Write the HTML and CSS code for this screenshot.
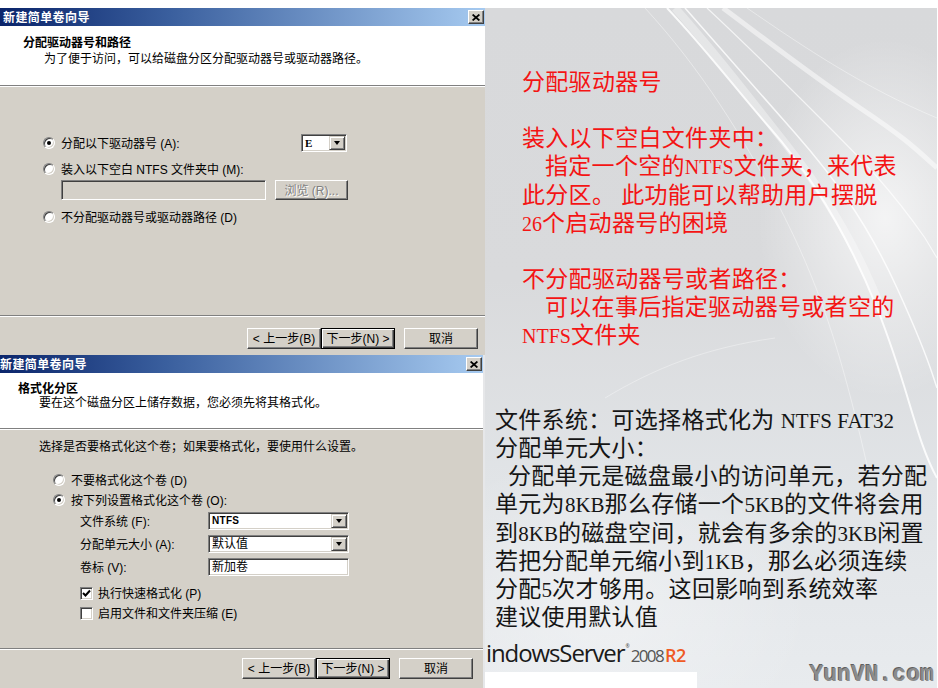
FILE: index.html
```html
<!DOCTYPE html>
<html lang="zh-CN">
<head>
<meta charset="utf-8">
<title>新建简单卷向导</title>
<link rel="stylesheet" href="styles.css">
</head>
<body>
<div class="page">
  <div class="dialogs">
    <section class="dlg dlg1">
      <div class="titlebar">
        <span class="title">新建简单卷向导</span>
        <span class="close"><svg width="8" height="7" viewBox="0 0 8 7"><path d="M0.6 0.5 L7.4 6.5 M7.4 0.5 L0.6 6.5" stroke="#000" stroke-width="1.7"/></svg></span>
      </div>
      <div class="header">
        <div class="h-title">分配驱动器号和路径</div>
        <div class="h-sub">为了便于访问，可以给磁盘分区分配驱动器号或驱动器路径。</div>
      </div>
      <div class="body">
        <div class="row r-first"><span class="radio on"></span><span class="lbl-wide">分配以下驱动器号 (A):</span><span class="combo combo-e"><span class="cval">E</span><span class="carrow"><i></i></span></span></div>
        <div class="row r-second"><span class="radio"></span><span>装入以下空白 NTFS 文件夹中 (M):</span></div>
        <div class="row r-third"><span class="field dis"></span><span class="btn dis">浏览 (R)...</span></div>
        <div class="row r-fourth"><span class="radio"></span><span>不分配驱动器号或驱动器路径 (D)</span></div>
      </div>
      <div class="sep"></div>
      <div class="footer">
        <span class="btn">&lt; 上一步(B)</span><span class="btn def">下一步(N) &gt;</span><span class="btn cancel">取消</span>
      </div>
    </section>

    <section class="dlg dlg2">
      <div class="titlebar">
        <span class="title">新建简单卷向导</span>
        <span class="close"><svg width="8" height="7" viewBox="0 0 8 7"><path d="M0.6 0.5 L7.4 6.5 M7.4 0.5 L0.6 6.5" stroke="#000" stroke-width="1.7"/></svg></span>
      </div>
      <div class="header">
        <div class="h-title">格式化分区</div>
        <div class="h-sub">要在这个磁盘分区上储存数据，您必须先将其格式化。</div>
      </div>
      <div class="body">
        <div class="intro">选择是否要格式化这个卷；如果要格式化，要使用什么设置。</div>
        <div class="row q1"><span class="radio"></span><span>不要格式化这个卷 (D)</span></div>
        <div class="row q2"><span class="radio on"></span><span>按下列设置格式化这个卷 (O):</span></div>
        <div class="row fld"><span class="flbl">文件系统 (F):</span><span class="combo combo-w"><span class="cval small">NTFS</span><span class="carrow"><i></i></span></span></div>
        <div class="row fld"><span class="flbl">分配单元大小 (A):</span><span class="combo combo-w"><span class="cval">默认值</span><span class="carrow"><i></i></span></span></div>
        <div class="row fld"><span class="flbl">卷标 (V):</span><span class="field input"><span class="cval">新加卷</span></span></div>
        <div class="row chk c1"><span class="check"><svg width="9" height="9" viewBox="0 0 9 9"><path d="M1 4 L3.5 6.5 L8 1.5" fill="none" stroke="#000" stroke-width="2"/></svg></span><span>执行快速格式化 (P)</span></div>
        <div class="row chk c2"><span class="check"></span><span>启用文件和文件夹压缩 (E)</span></div>
      </div>
      <div class="sep"></div>
      <div class="footer">
        <span class="btn">&lt; 上一步(B)</span><span class="btn def">下一步(N) &gt;</span><span class="btn cancel">取消</span>
      </div>
    </section>
  </div>

  <div class="panel">
    <svg class="swoosh" width="452" height="680" viewBox="0 0 452 680">
      <path d="M182 0 C220 40 250 80 285 120 S360 220 392 300 S430 430 452 470" stroke="#fff" stroke-opacity="0.85" stroke-width="2" fill="none"/>
      <path d="M200 0 C240 45 275 85 310 125 S380 210 412 280 S445 360 452 380" stroke="#fff" stroke-opacity="0.8" stroke-width="1.5" fill="none"/>
      <path d="M222 0 C265 40 300 75 340 115 S405 180 440 230 L452 250" stroke="#fff" stroke-opacity="0.7" stroke-width="1.2" fill="none"/>
      <path d="M238 0 C285 35 330 70 375 100 S430 140 452 160" stroke="#fff" stroke-opacity="0.5" stroke-width="5" fill="none"/>
      <path d="M190 0 C235 50 268 95 300 135 S370 230 400 310" stroke="#fff" stroke-opacity="0.35" stroke-width="8" fill="none"/>
      <path d="M160 0 C215 60 260 130 300 210 S360 360 385 470" stroke="#fff" stroke-opacity="0.4" stroke-width="1" fill="none"/>
      <path d="M262 0 C320 40 380 80 452 110" stroke="#fff" stroke-opacity="0.4" stroke-width="1" fill="none"/>
      <path d="M120 390 C170 360 220 340 290 330" stroke="#fff" stroke-opacity="0.35" stroke-width="1" fill="none"/>
    </svg>
    <div class="notes">
      <div class="red">
        <div class="ln">分配驱动器号</div>
        <div class="ln blank"></div>
        <div class="ln">装入以下空白文件夹中：</div>
        <div class="ln ind">指定一个空的<span class="lat">NTFS</span>文件夹，来代表</div>
        <div class="ln">此分区。 此功能可以帮助用户摆脱</div>
        <div class="ln"><span class="lat">26</span>个启动器号的困境</div>
        <div class="ln blank"></div>
        <div class="ln">不分配驱动器号或者路径：</div>
        <div class="ln ind">可以在事后指定驱动器号或者空的</div>
        <div class="ln"><span class="lat">NTFS</span>文件夹</div>
      </div>
      <div class="black">
        <div class="ln">文件系统：可选择格式化为 <span class="lat">NTFS FAT32</span></div>
        <div class="ln">分配单元大小：</div>
        <div class="ln ind-half">分配单元是磁盘最小的访问单元，若分配</div>
        <div class="ln">单元为<span class="lat">8KB</span>那么存储一个<span class="lat">5KB</span>的文件将会用</div>
        <div class="ln">到<span class="lat">8KB</span>的磁盘空间，就会有多余的<span class="lat">3KB</span>闲置</div>
        <div class="ln">若把分配单元缩小到<span class="lat">1KB</span>，那么必须连续</div>
        <div class="ln">分配<span class="lat">5</span>次才够用。这回影响到系统效率</div>
        <div class="ln">建议使用默认值</div>
      </div>
    </div>
    <div class="pfoot">
      <div class="logo-wrap">
        <div class="logo"><span class="ws">indowsServer</span><span class="tm">®</span><span class="yr">2008</span><span class="r2">R2</span></div>
        <div class="logo-base"></div>
      </div>
      <div class="watermark">YunVN.com</div>
    </div>
  </div>
</div>
</body>
</html>
```

FILE: styles.css
```css
* { box-sizing: border-box; margin: 0; padding: 0; }
html, body { width: 938px; height: 688px; overflow: hidden; background: #fff; }
body { font-family: "Noto Sans CJK SC", sans-serif; }

.page { display: flex; height: 688px; padding-top: 8px; }

/* ---------- dialogs ---------- */
.dialogs { width: 485px; flex: none; display: flex; flex-direction: column; background: #e6e7e9; }
.dlg { background: #d4d0c8; font-family: "Liberation Sans", "Noto Sans CJK SC", sans-serif; font-size: 12px; line-height: 14px; color: #000; display: flex; flex-direction: column; overflow: hidden; flex: none; }
.dlg1 { width: 485px; height: 347px; }
.dlg2 { width: 488px; height: 333px; margin-left: -5px; }

.titlebar { height: 18px; flex: none; background: linear-gradient(90deg, #0a246a 0%, #3a5f9e 35%, #a6caf0 100%); display: flex; align-items: center; justify-content: space-between; padding-left: 3px; padding-right: 1px; }
.dlg2 .titlebar { padding-left: 5px; }
.title { color: #fff; font-weight: bold; font-size: 12px; line-height: 14px; letter-spacing: 0.4px; padding-top: 1px; }
.close { width: 16px; height: 14px; background: #d4d0c8; border: 1px solid; border-color: #fff #404040 #404040 #fff; box-shadow: inset -1px -1px #808080; display: flex; align-items: center; justify-content: center; }

.header { background: #fff; border-bottom: 1px solid #808080; flex: none; padding-left: 23px; }
.dlg1 .header { height: 60px; padding-top: 10px; }
.dlg2 .header { height: 56px; padding-top: 9px; }
.h-title { font-weight: bold; }
.h-sub { padding-left: 21px; }
.dlg1 .h-sub { margin-top: 2px; }

.body { flex: 1; border-top: 1px solid #fff; }
.dlg1 .body { padding-top: 47px; }
.dlg2 .body { padding-top: 10px; }

.sep { height: 2px; flex: none; border-top: 1px solid #808080; border-bottom: 1px solid #fff; }
.footer { height: 38px; flex: none; display: flex; padding-left: 247px; }
.dlg1 .footer { padding-top: 11px; }
.dlg2 .footer { padding-top: 8px; }

.row { display: flex; align-items: center; white-space: nowrap; }
.row > span:last-child, .lbl-wide, .flbl { padding-top: 1px; }

/* dialog 1 rows */
.dlg1 .row { padding-left: 43px; }
.r-first { height: 18px; }
.r-second { height: 14px; margin-top: 10px; }
.r-third { height: 20px; margin-top: 4px; }
.dlg1 .r-third { padding-left: 61px; }
.r-fourth { height: 14px; margin-top: 10px; }
.lbl-wide { width: 240px; }

/* dialog 2 rows */
.intro { padding-left: 44px; height: 14px; }
.q1, .q2 { height: 14px; padding-left: 58px; }
.q1 { margin-top: 19px; }
.q2 { margin-top: 6px; }
.fld { height: 18px; margin-top: 5px; padding-left: 85px; }
.flbl { width: 128px; }
.chk { height: 13px; padding-left: 85px; }
.c1 { margin-top: 11px; }
.c2 { margin-top: 7px; }

/* controls */
.radio { position: relative; width: 12px; height: 12px; border-radius: 50%; background: #fff; flex: none; margin-right: 6px;
  border: 1px solid; border-color: #808080 #fff #fff #808080; box-shadow: inset 1px 1px 0 #404040, inset -1px -1px 0 #d4d0c8; }
.radio.on::after { content: ""; position: absolute; left: 3px; top: 3px; width: 4px; height: 4px; border-radius: 50%; background: #000; }

.check { width: 13px; height: 13px; flex: none; background: #fff; margin-right: 5px; display: flex; align-items: center; justify-content: center;
  border: 1px solid; border-color: #808080 #fff #fff #808080; box-shadow: inset 1px 1px 0 #404040, inset -1px -1px 0 #d4d0c8; }

.combo, .field { height: 18px; background: #fff; display: flex; align-items: center; justify-content: space-between; flex: none;
  border: 1px solid; border-color: #808080 #fff #fff #808080; box-shadow: inset 1px 1px 0 #404040, inset -1px -1px 0 #d4d0c8; padding: 1px; }
.row > .combo, .row > .field { padding-top: 1px; }
.combo-e { width: 46px; }
.combo-w { width: 141px; }
.field.input { width: 141px; }
.field.dis { width: 205px; height: 20px; background: #d4d0c8; margin-right: 9px; }
.cval { padding-left: 2px; line-height: 14px; }
.cval.small { font-size: 10px; font-weight: bold; letter-spacing: 0.3px; }
.combo-e .cval { font-size: 11px; font-family: "Liberation Serif", serif; font-weight: bold; }
.carrow { width: 16px; height: 14px; background: #d4d0c8; display: flex; align-items: center; justify-content: center;
  border: 1px solid; border-color: #d4d0c8 #404040 #404040 #d4d0c8; box-shadow: inset 1px 1px 0 #fff, inset -1px -1px 0 #808080; }
.carrow i { width: 0; height: 0; border-left: 3.5px solid transparent; border-right: 3.5px solid transparent; border-top: 4px solid #000; }

.btn { width: 74px; height: 21px; display: flex; align-items: center; justify-content: center; background: #d4d0c8; flex: none;
  border: 1px solid; border-color: #fff #404040 #404040 #fff; box-shadow: inset -1px -1px 0 #808080; white-space: nowrap; padding-top: 1px; }
.btn.def { border-color: #000; box-shadow: inset 1px 1px 0 #fff, inset -1px -1px 0 #404040, inset -2px -2px 0 #808080; }
.btn.cancel { margin-left: 9px; }
.btn.dis { width: 73px; height: 20px; color: #808080; text-shadow: 1px 1px 0 #fff; }

/* ---------- right panel ---------- */
.panel { position: relative; flex: none; width: 452px; height: 680px; display: flex; flex-direction: column; overflow: hidden;
  background:
    radial-gradient(ellipse 170px 240px at 400px 210px, rgba(255,255,255,0.7), rgba(255,255,255,0) 75%),
    radial-gradient(ellipse 260px 200px at 120px 600px, rgba(255,255,255,0.35), rgba(255,255,255,0) 80%),
    linear-gradient(180deg, #d8d9db 0%, #d9dadc 40%, #e1e4e7 70%, #e8ebee 100%); }
.swoosh { position: absolute; left: 0; top: 0; }
.notes { position: relative; padding-top: 61px; padding-left: 10px; font-family: "Liberation Serif", "Noto Sans CJK SC", serif; font-size: 23px; line-height: 28.16px; letter-spacing: 0.3px; white-space: nowrap; }
.ln { height: 28.16px; }
.red { color: #f41414; padding-left: 27px; }
.black { color: #151515; margin-top: 56.32px; }
.ind { padding-left: 23px; }
.ind-half { padding-left: 13px; }
.lat { font-family: "Liberation Serif", serif; font-size: 20px; line-height: 20px; letter-spacing: 0; }
.black .lat { font-size: 21px; }

.pfoot { position: relative; margin-top: auto; display: flex; justify-content: space-between; align-items: flex-end; }
.logo-wrap { width: 212px; }
.logo { height: 33px; display: flex; align-items: baseline; white-space: nowrap; padding-left: 1px; line-height: 28px; }
.ws { font-family: "Open Sans", sans-serif; font-size: 24px; letter-spacing: -1.1px; color: #1a1a1a; }
.tm { font-family: "Open Sans", sans-serif; font-size: 5px; line-height: 5px; color: #444; position: relative; top: -14px; margin: 0 1px; }
.yr { font-family: "Open Sans", sans-serif; font-size: 17px; letter-spacing: -1.6px; color: #555; margin-right: 2px; }
.r2 { font-family: "Open Sans", sans-serif; font-size: 18px; font-weight: 600; letter-spacing: -0.5px; color: #ef5a24; }
.logo-base { height: 16px; background: #fff; }
.watermark { font-family: "Liberation Mono", monospace; font-weight: bold; font-size: 23px; line-height: 26px; color: #8c8c8c; text-shadow: -1px -1px 0 #606060; margin-right: 3px; }
```
